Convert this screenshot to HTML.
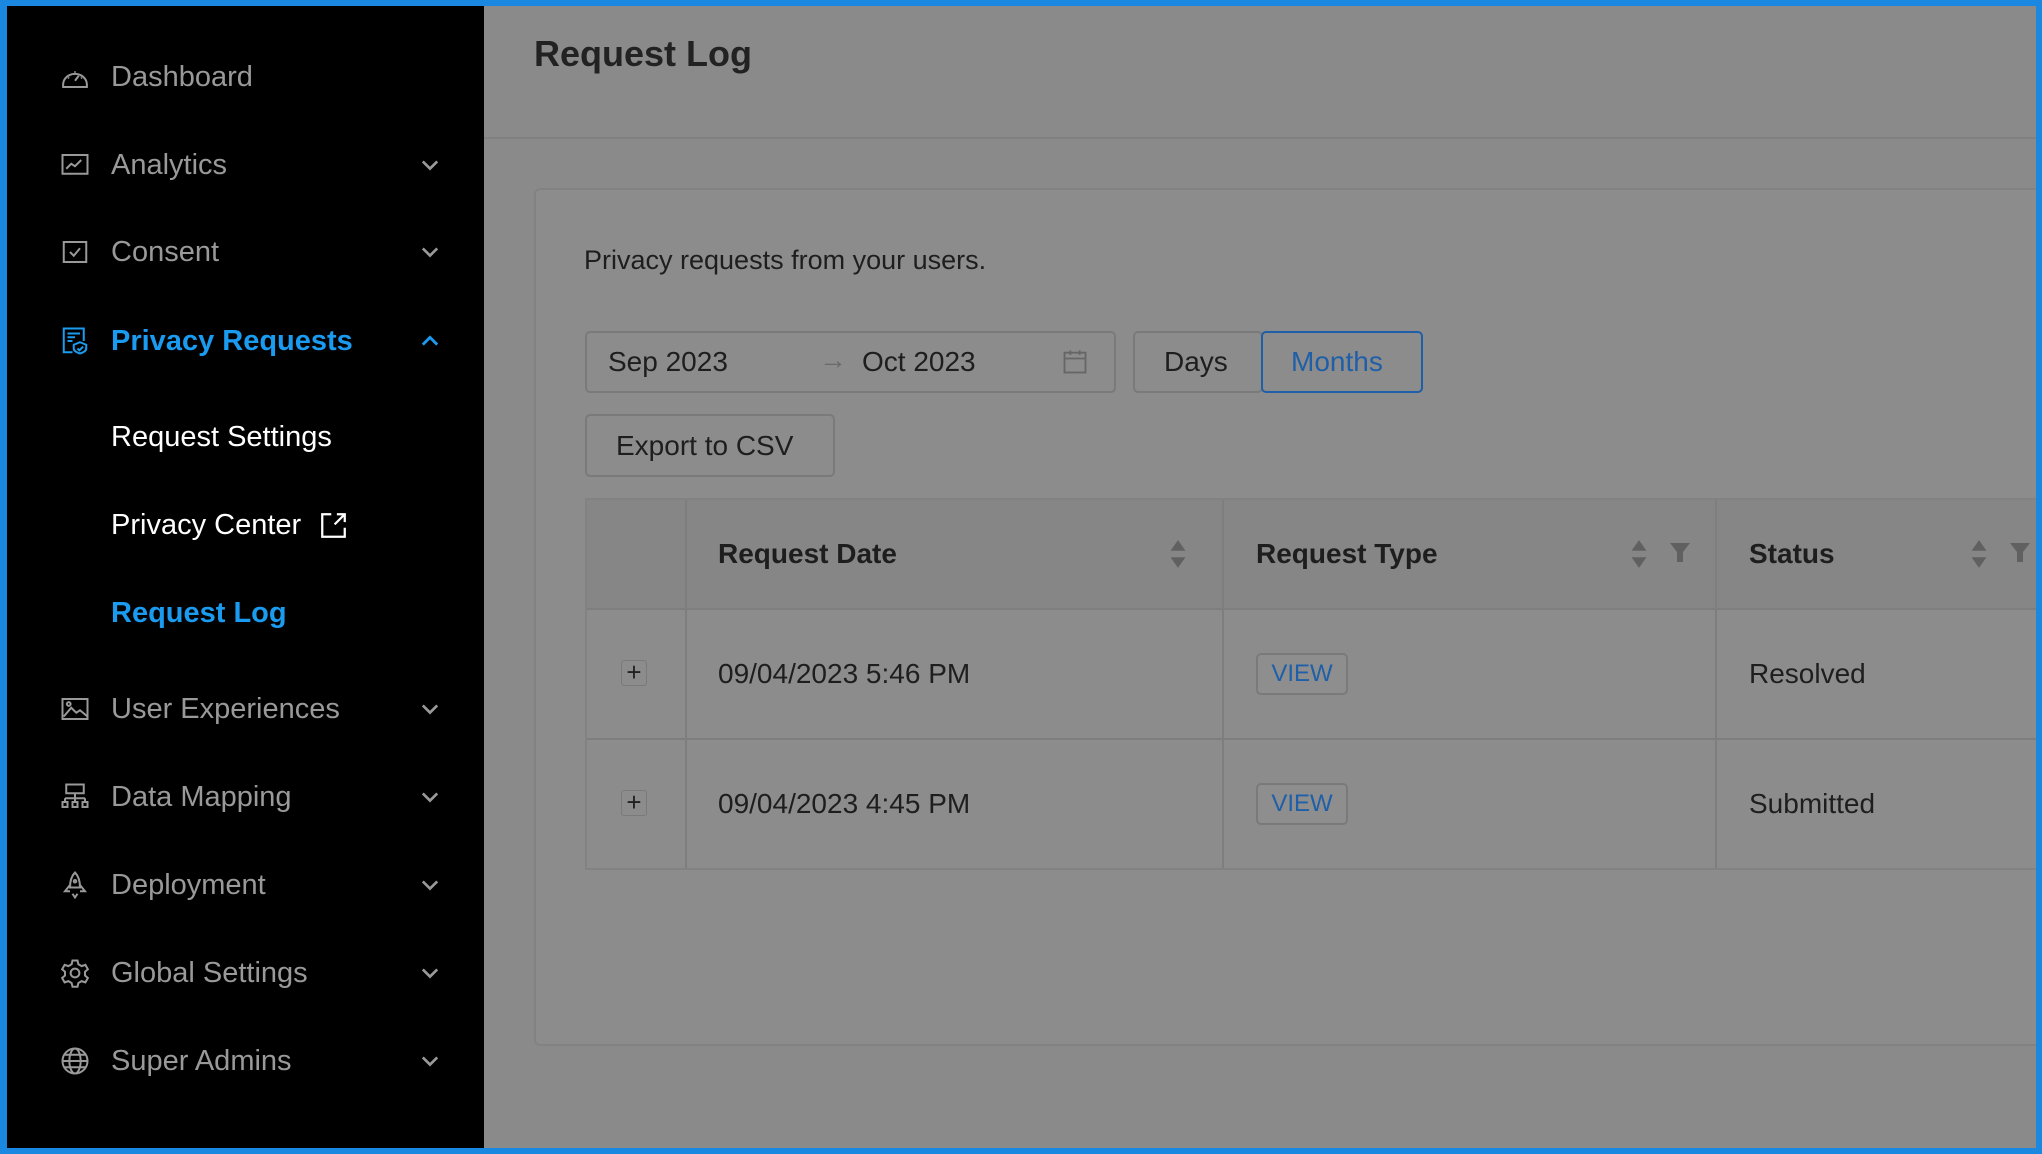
<!DOCTYPE html>
<html><head><meta charset="utf-8"><style>
*{box-sizing:border-box;margin:0;padding:0}
body{width:2042px;height:1154px;overflow:hidden;background:#1a87e0;font-family:"Liberation Sans",sans-serif;position:relative}
#frame{position:absolute;left:7px;top:6px;width:2029px;height:1142px;background:#8a8a8a;overflow:hidden}
#side{position:absolute;left:0;top:0;width:477px;height:1142px;background:#000}
.it{position:absolute;left:0;width:477px;height:40px;display:flex;align-items:center;font-size:29px;color:#999}
.it .ic{position:absolute;left:53px;width:30px;height:30px}
.it .tx{position:absolute;left:104px;white-space:nowrap}
.it .ch{position:absolute;left:411px;width:24px;height:24px}
.a{color:#1a9bf0;font-weight:bold}
.w{color:#fff}
.abs{position:absolute}
.t{color:#1e1e1e}
.box{position:absolute;border:2px solid #7a7a7a;border-radius:5px}
.hd{position:absolute;font-size:28px;font-weight:bold;color:#1e1e1e}
.cell{position:absolute;font-size:28px;color:#1e1e1e}
</style></head><body>
<div id="frame">
<div id="side">
<div class="it" style="top:51px"><svg class="ic" viewBox="0 0 24 24" fill="none" stroke="#999" stroke-width="1.6"><path d="M2.5 18a9.5 8.5 0 1 1 19 0v2h-19z"/><path d="M12 15l3-4"/><path d="M6.5 12.5l.7.5M12 7.5v1M17.5 12.5l-.7.5"/></svg><span class="tx">Dashboard</span></div>
<div class="it" style="top:139px"><svg class="ic" viewBox="0 0 24 24" fill="none" stroke="#999" stroke-width="1.6"><rect x="2" y="4" width="20" height="15"/><path d="M5 15l4-4 3 2 5-5"/></svg><span class="tx">Analytics</span><svg class="ch" viewBox="0 0 20 20" fill="none" stroke="#999" stroke-width="2.2"><path d="M4 7l6 6 6-6"/></svg></div>
<div class="it" style="top:226px"><svg class="ic" viewBox="0 0 24 24" fill="none" stroke="#999" stroke-width="1.6"><rect x="3" y="4" width="18" height="16"/><path d="M8 12l3 3 5-6"/></svg><span class="tx">Consent</span><svg class="ch" viewBox="0 0 20 20" fill="none" stroke="#999" stroke-width="2.2"><path d="M4 7l6 6 6-6"/></svg></div>
<div class="it a" style="top:315px"><svg class="ic" viewBox="0 0 24 24" fill="none" stroke="#1a9bf0" stroke-width="1.6"><path d="M10 21H3V2h16v10"/><path d="M6 6h10M6 9h6M6 12h4"/><path d="M16 13l5 2v3c0 2-2 3-5 4-3-1-5-2-5-4v-3z"/><path d="M14 18l1.5 1.5 3-3"/></svg><span class="tx">Privacy Requests</span><svg class="ch" viewBox="0 0 20 20" fill="none" stroke="#1a9bf0" stroke-width="2.4"><path d="M4 13l6-6 6 6"/></svg></div>
<div class="it w" style="top:411px"><span class="tx">Request Settings</span></div>
<div class="it w" style="top:499px"><span class="tx">Privacy Center</span><svg class="abs" style="left:313px;top:7px" width="27" height="27" viewBox="0 0 24 24" fill="none" stroke="#fff" stroke-width="2"><path d="M10 2H2v20h20v-8"/><path d="M13 11l9-9M15 2h7v7"/></svg></div>
<div class="it a" style="top:587px"><span class="tx">Request Log</span></div>
<div class="it" style="top:683px"><svg class="ic" viewBox="0 0 24 24" fill="none" stroke="#999" stroke-width="1.6"><rect x="2" y="4" width="20" height="16"/><circle cx="7" cy="8" r="1.5"/><path d="M3 18l6-7 4 4 3-2 6 5"/></svg><span class="tx">User Experiences</span><svg class="ch" viewBox="0 0 20 20" fill="none" stroke="#999" stroke-width="2.2"><path d="M4 7l6 6 6-6"/></svg></div>
<div class="it" style="top:771px"><svg class="ic" viewBox="0 0 24 24" fill="none" stroke="#999" stroke-width="1.6"><rect x="5" y="2" width="14" height="7"/><path d="M12 9v4M4 13h16M4 13v3M12 13v3M20 13v3"/><rect x="2" y="16" width="4" height="4"/><rect x="10" y="16" width="4" height="4"/><rect x="18" y="16" width="4" height="4"/></svg><span class="tx">Data Mapping</span><svg class="ch" viewBox="0 0 20 20" fill="none" stroke="#999" stroke-width="2.2"><path d="M4 7l6 6 6-6"/></svg></div>
<div class="it" style="top:859px"><svg class="ic" viewBox="0 0 24 24" fill="none" stroke="#999" stroke-width="1.6"><path d="M12 2c-3 3-4 7-4 12h8c0-5-1-9-4-12z"/><path d="M8 12l-4 5h4M16 12l4 5h-4M10 19l2 3 2-3"/><circle cx="12" cy="9" r="1"/></svg><span class="tx">Deployment</span><svg class="ch" viewBox="0 0 20 20" fill="none" stroke="#999" stroke-width="2.2"><path d="M4 7l6 6 6-6"/></svg></div>
<div class="it" style="top:947px"><svg class="ic" viewBox="0 0 24 24" fill="none" stroke="#999" stroke-width="1.6"><circle cx="12" cy="12" r="3.5"/><path d="M10 2h4l.7 3 2.6 1.5 3-1 2 3.5-2.3 2v3l2.3 2-2 3.5-3-1-2.6 1.5-.7 3h-4l-.7-3-2.6-1.5-3 1-2-3.5 2.3-2v-3l-2.3-2 2-3.5 3 1L9.3 5z"/></svg><span class="tx">Global Settings</span><svg class="ch" viewBox="0 0 20 20" fill="none" stroke="#999" stroke-width="2.2"><path d="M4 7l6 6 6-6"/></svg></div>
<div class="it" style="top:1035px"><svg class="ic" viewBox="0 0 24 24" fill="none" stroke="#999" stroke-width="1.6"><circle cx="12" cy="12" r="10"/><ellipse cx="12" cy="12" rx="4.5" ry="10"/><path d="M2 12h20M4 7h16M4 17h16"/></svg><span class="tx">Super Admins</span><svg class="ch" viewBox="0 0 20 20" fill="none" stroke="#999" stroke-width="2.2"><path d="M4 7l6 6 6-6"/></svg></div>
</div>

<div class="abs t" style="left:527px;top:27px;font-size:36px;font-weight:bold;color:#222">Request Log</div>
<div class="abs" style="left:477px;top:131px;width:1560px;height:2px;background:#808080"></div>
<div class="abs" style="left:527px;top:182px;width:1560px;height:858px;border:2px solid #828282;border-radius:6px;background:#8c8c8c"></div>
<div class="abs t" style="left:577px;top:239px;font-size:27px">Privacy requests from your users.</div>

<div class="box" style="left:578px;top:325px;width:531px;height:62px"></div>
<div class="cell" style="left:601px;top:340px">Sep 2023</div>
<div class="cell" style="left:812px;top:338px;color:#6a6a6a">→</div>
<div class="cell" style="left:855px;top:340px">Oct 2023</div>
<svg class="abs" style="left:1054px;top:342px" width="28" height="28" viewBox="0 0 24 24" fill="none" stroke="#666" stroke-width="1.6"><rect x="3" y="4" width="18" height="17"/><path d="M3 9h18M8 2v4M16 2v4"/></svg>
<div class="box" style="left:1126px;top:325px;width:130px;height:62px"></div>
<div class="cell" style="left:1157px;top:340px">Days</div>
<div class="box" style="left:1254px;top:325px;width:162px;height:62px;border-color:#1f5fa8"></div>
<div class="cell" style="left:1284px;top:340px;color:#1f5fa8">Months</div>
<div class="box" style="left:578px;top:408px;width:250px;height:63px"></div>
<div class="cell" style="left:609px;top:424px">Export to CSV</div>

<div class="abs" style="left:578px;top:492px;width:1460px;height:372px;border:2px solid #828282;border-right:none"></div>
<div class="abs" style="left:580px;top:494px;width:1460px;height:108px;background:#868686"></div>
<div class="abs" style="left:580px;top:602px;width:1460px;height:2px;background:#7e7e7e"></div>
<div class="abs" style="left:580px;top:732px;width:1460px;height:2px;background:#7e7e7e"></div>
<div class="abs" style="left:678px;top:494px;width:2px;height:368px;background:#7e7e7e"></div>
<div class="abs" style="left:1215px;top:494px;width:2px;height:368px;background:#7e7e7e"></div>
<div class="abs" style="left:1708px;top:494px;width:2px;height:368px;background:#7e7e7e"></div>

<div class="hd" style="left:711px;top:532px">Request Date</div>
<div class="hd" style="left:1249px;top:532px">Request Type</div>
<div class="hd" style="left:1742px;top:532px">Status</div>
<svg class="abs" style="left:1161px;top:532px" width="20" height="32" viewBox="0 0 18 30" fill="#606060"><path d="M9 2l7 10H2zM9 28l7-10H2z"/></svg>
<svg class="abs" style="left:1622px;top:532px" width="20" height="32" viewBox="0 0 18 30" fill="#606060"><path d="M9 2l7 10H2zM9 28l7-10H2z"/></svg>
<svg class="abs" style="left:1662px;top:534px" width="22" height="26" viewBox="0 0 22 26" fill="#606060"><path d="M1 3h20l-7 9v10h-6V12z"/></svg>
<svg class="abs" style="left:1962px;top:532px" width="20" height="32" viewBox="0 0 18 30" fill="#606060"><path d="M9 2l7 10H2zM9 28l7-10H2z"/></svg>
<svg class="abs" style="left:2002px;top:534px" width="22" height="26" viewBox="0 0 22 26" fill="#606060"><path d="M1 3h20l-7 9v10h-6V12z"/></svg>

<div class="abs" style="left:614px;top:654px;width:26px;height:26px;border:1px solid #7a7a7a;border-radius:3px;font-size:26px;line-height:22px;text-align:center;color:#222">+</div>
<div class="cell" style="left:711px;top:652px">09/04/2023 5:46 PM</div>
<div class="abs" style="left:1249px;top:647px;width:92px;height:42px;border:2px solid #7a7a7a;border-radius:5px;background:#8e8e8e;font-size:24px;line-height:38px;text-align:center;color:#1f5fa8">VIEW</div>
<div class="cell" style="left:1742px;top:652px">Resolved</div>

<div class="abs" style="left:614px;top:784px;width:26px;height:26px;border:1px solid #7a7a7a;border-radius:3px;font-size:26px;line-height:22px;text-align:center;color:#222">+</div>
<div class="cell" style="left:711px;top:782px">09/04/2023 4:45 PM</div>
<div class="abs" style="left:1249px;top:777px;width:92px;height:42px;border:2px solid #7a7a7a;border-radius:5px;background:#8e8e8e;font-size:24px;line-height:38px;text-align:center;color:#1f5fa8">VIEW</div>
<div class="cell" style="left:1742px;top:782px">Submitted</div>
</div>
</body></html>
